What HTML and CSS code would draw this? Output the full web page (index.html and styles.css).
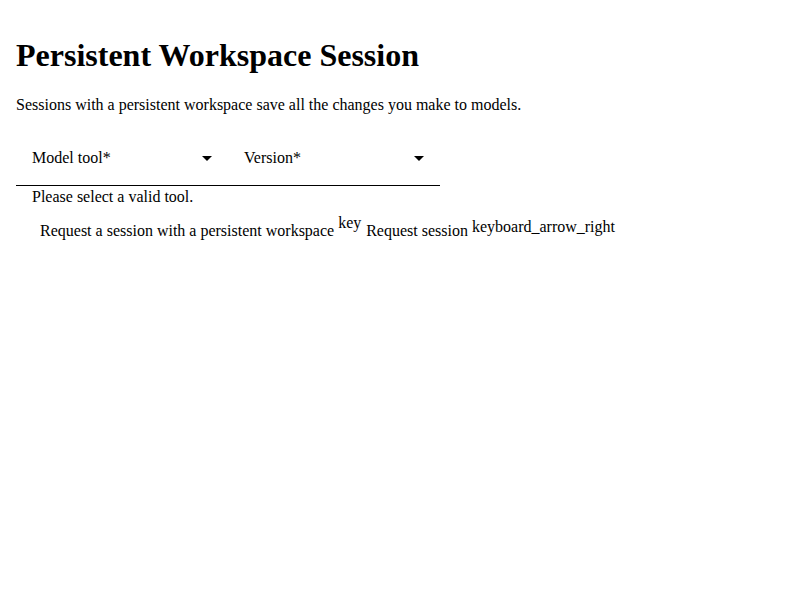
FILE: index.html
```html
<!DOCTYPE html>
<html lang="en">
<head>
<meta charset="utf-8">
<title>Persistent Workspace Session</title>
<link rel="stylesheet" href="styles.css">
</head>
<body>
<div class="page">
  <h1 class="title">Persistent Workspace Session</h1>
  <p class="intro">Sessions with a persistent workspace save all the changes you make to models.</p>
  <form class="form">
    <div class="fields">
      <div class="field">
        <span class="label">Model tool*</span>
        <span class="arrow"></span>
      </div>
      <div class="field">
        <span class="label">Version*</span>
        <span class="arrow"></span>
      </div>
    </div>
    <div class="error">Please select a valid tool.</div>
    <div class="actions">Request a session with a persistent workspace <span class="icon icon-key">key</span> Request session <span class="icon icon-arrow">keyboard_arrow_right</span></div>
  </form>
</div>
</body>
</html>
```

FILE: styles.css
```css
html, body {
  margin: 0;
  padding: 0;
  background: #ffffff;
}

body {
  font-family: "Liberation Serif", "Times New Roman", serif;
  font-size: 16px;
  color: #000000;
}

.page {
  padding: 0 16px;
}

.title {
  font-size: 32px;
  font-weight: bold;
  margin: 0;
  padding-top: 37px;
  line-height: 37px;
}

.intro {
  margin: 22px 0 0 0;
  line-height: 18px;
}

.form {
  margin: 0;
}

.fields {
  display: flex;
  width: 424px;
  margin-top: 8px;
  border-bottom: 1px solid #000000;
}

.field {
  flex: 1 1 0;
  display: flex;
  align-items: center;
  justify-content: space-between;
  padding: 27px 16px 18px 16px;
  line-height: 18px;
}

.arrow {
  width: 0;
  height: 0;
  border-left: 5px solid transparent;
  border-right: 5px solid transparent;
  border-top: 5px solid #000000;
}

.error {
  padding-left: 16px;
  margin-top: 2px;
  line-height: 18px;
}

.actions {
  padding-left: 24px;
  margin-top: 8px;
  line-height: normal;
}

.icon {
  display: inline-block;
}

.icon-key {
  min-width: 24px;
  vertical-align: 8px;
}

.icon-arrow {
  vertical-align: 4px;
}
```
